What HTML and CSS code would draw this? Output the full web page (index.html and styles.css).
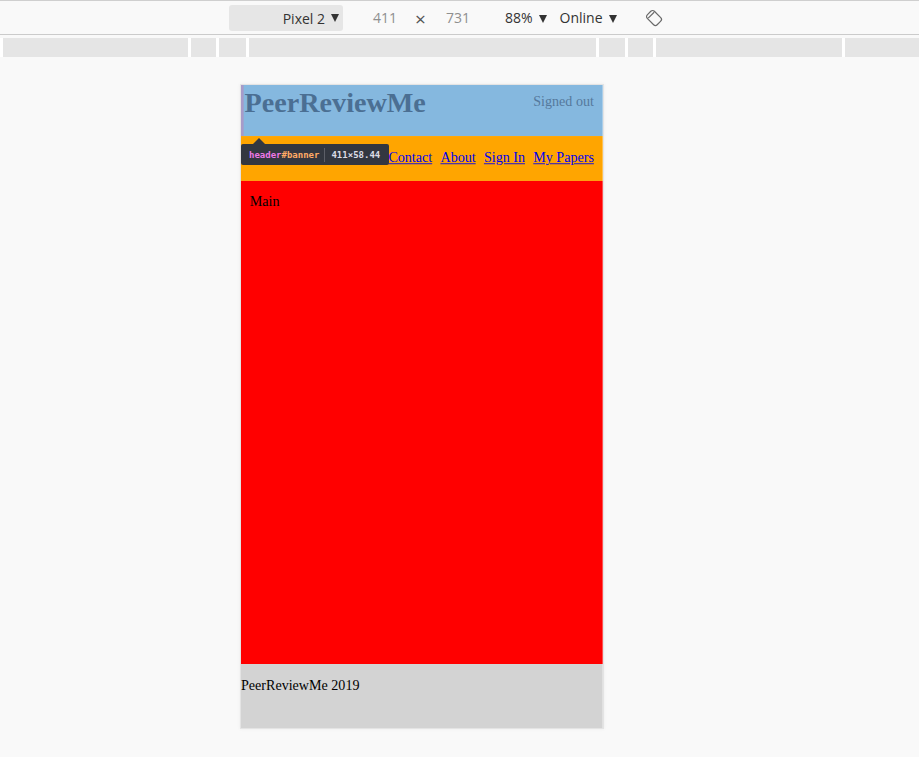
FILE: index.html
```html
<!DOCTYPE html>
<html>
<head>
<meta charset="utf-8">
<link rel="stylesheet" href="styles.css">
</head>
<body>
<div class="toolbar">
  <div class="device-btn">Pixel 2<span class="tri"></span></div>
  <span class="dim w">411</span>
  <span class="times">×</span>
  <span class="dim h">731</span>
  <span class="zoom">88%<span class="tri"></span></span>
  <span class="net">Online<span class="tri"></span></span>
  <svg class="rotate" width="20" height="20" viewBox="0 0 20 20">
    <g transform="rotate(45 10 10)" fill="none" stroke="#6a6a6a" stroke-width="1.2">
      <rect x="3" y="5" width="14" height="10" rx="2.5"/>
      <line x1="6" y1="5.8" x2="6" y2="14.2"/>
    </g>
  </svg>
</div>
<div class="ruler">
  <div class="seg s1"></div>
  <div class="seg s2"></div>
  <div class="seg s3"></div>
  <div class="seg s4"></div>
  <div class="seg s5"></div>
  <div class="seg s6"></div>
  <div class="seg s7"></div>
  <div class="seg s8"></div>
</div>
<div class="stage">
  <div class="device">
    <div class="screen">
      <header id="banner" class="banner">
        <h1 class="logo">PeerReviewMe</h1>
        <span class="status">Signed out</span>
      </header>
      <nav class="nav">
        <a href="#">Contact</a>
        <a href="#">About</a>
        <a href="#">Sign In</a>
        <a href="#">My Papers</a>
      </nav>
      <main class="main"><p>Main</p></main>
      <footer class="footer"><p>PeerReviewMe 2019</p></footer>
    </div>
    <div class="tip">
      <span class="tip-arrow"></span>
      <span class="tip-tag">header</span><span class="tip-id">#banner</span>
      <span class="tip-sep"></span>
      <span class="tip-size">411×58.44</span>
    </div>
  </div>
</div>
</body>
</html>
```
FILE: styles.css
```css
html, body {
  margin: 0;
  padding: 0;
  background: #f9f9f9;
}
body {
  width: 919px;
  height: 757px;
  overflow: hidden;
  font-family: "Open Sans", "Noto Sans", sans-serif;
}
.toolbar {
  height: 33px;
  border-top: 1px solid #cfcfcf;
  border-bottom: 1px solid #cbcbcb;
  background: #f9f9f9;
  display: flex;
  align-items: center;
  padding-left: 229px;
  font-size: 14px;
  color: #333;
  box-sizing: content-box;
  white-space: nowrap;
}
.device-btn {
  width: 114px;
  height: 26px;
  margin-top: 1px;
  background: #e6e6e6;
  border-radius: 3px;
  display: flex;
  align-items: center;
  justify-content: flex-end;
  padding-right: 4px;
  box-sizing: border-box;
  color: #333;
}
.device-btn .tri { margin-left: 6px; }
.tri {
  display: inline-block;
  width: 0;
  height: 0;
  border-left: 4.5px solid transparent;
  border-right: 4.5px solid transparent;
  border-top: 8px solid #333;
  margin-left: 6px;
  vertical-align: middle;
  position: relative;
  top: 0;
}
.dim { color: #8f8f8f; }
.w { margin-left: 30px; }
.times { margin-left: 18px; color: #555; font-size: 19px; line-height: 1; position: relative; top: 2px; }
.h { margin-left: 20px; }
.zoom { margin-left: 35px; }
.net { margin-left: 13px; }
.rotate { margin-left: 27px; margin-top: 1px; }

.ruler {
  margin-top: 3px;
  height: 19px;
  background: #fff;
  display: flex;
  gap: 3px;
  padding-left: 3px;
}
.seg { background: #e5e5e5; height: 19px; flex: none; }
.s1 { width: 185px; }
.s2 { width: 25px; }
.s3 { width: 27px; }
.s4 { width: 347px; }
.s5 { width: 26px; }
.s6 { width: 25px; }
.s7 { width: 186px; }
.s8 { width: 74px; }

.stage {
  padding-top: 28px;
  padding-left: 241px;
}
.device {
  position: relative;
  width: 362px;
  height: 643px;
  box-shadow: 0 0 0 1px #e4e4e4, 0 0 3px 1px #ececec;
}
.screen {
  width: 411px;
  height: 731px;
  transform: scale(0.88);
  transform-origin: 0 0;
  display: flex;
  flex-direction: column;
  font-family: "Liberation Serif", "Times New Roman", serif;
  font-size: 16px;
  background: #fff;
}
.banner {
  height: 58.44px;
  flex: none;
  background: #85b8df;
  display: flex;
  justify-content: space-between;
  align-items: flex-start;
  border-left: 3px solid #a79bc9;
  padding: 0 10px 0 1px;
  box-sizing: border-box;
  color: #4b6f93;
}
.logo {
  margin: 0;
  padding-top: 1.5px;
  font-size: 32px;
  font-weight: bold;
  line-height: normal;
}
.status {
  padding-top: 10px;
  color: #55799c;
}
.nav {
  flex: none;
  background: #ffa500;
  display: flex;
  justify-content: flex-end;
  gap: 9.4px;
  padding: 16px 10px;
  line-height: 18.4px;
}
.nav a { color: #0000ee; text-decoration: underline; }
.main {
  flex: 1;
  background: #ff0000;
  padding: 0 10px;
}
.main p { margin: 15px 0; }
.footer {
  flex: none;
  height: 73px;
  background: #d3d3d3;
}
.footer p { margin: 16px 0; }

.tip {
  position: absolute;
  left: 0;
  top: 59px;
  height: 21px;
  width: 148px;
  background: #333740;
  border-radius: 2px;
  display: flex;
  align-items: center;
  padding-left: 8px;
  box-sizing: border-box;
  font-family: "DejaVu Sans Mono", monospace;
  font-size: 9px;
  font-weight: bold;
  white-space: nowrap;
}
.tip-arrow {
  position: absolute;
  left: 12px;
  top: -6px;
  width: 0;
  height: 0;
  border-left: 6px solid transparent;
  border-right: 6px solid transparent;
  border-bottom: 6px solid #333740;
}
.tip-tag { color: #ee78e6; }
.tip-id { color: #ffab66; }
.tip-sep {
  width: 1px;
  height: 14px;
  background: #5c5f68;
  margin: 0 6px 0 5px;
}
.tip-size { color: #dcdce6; }
```
